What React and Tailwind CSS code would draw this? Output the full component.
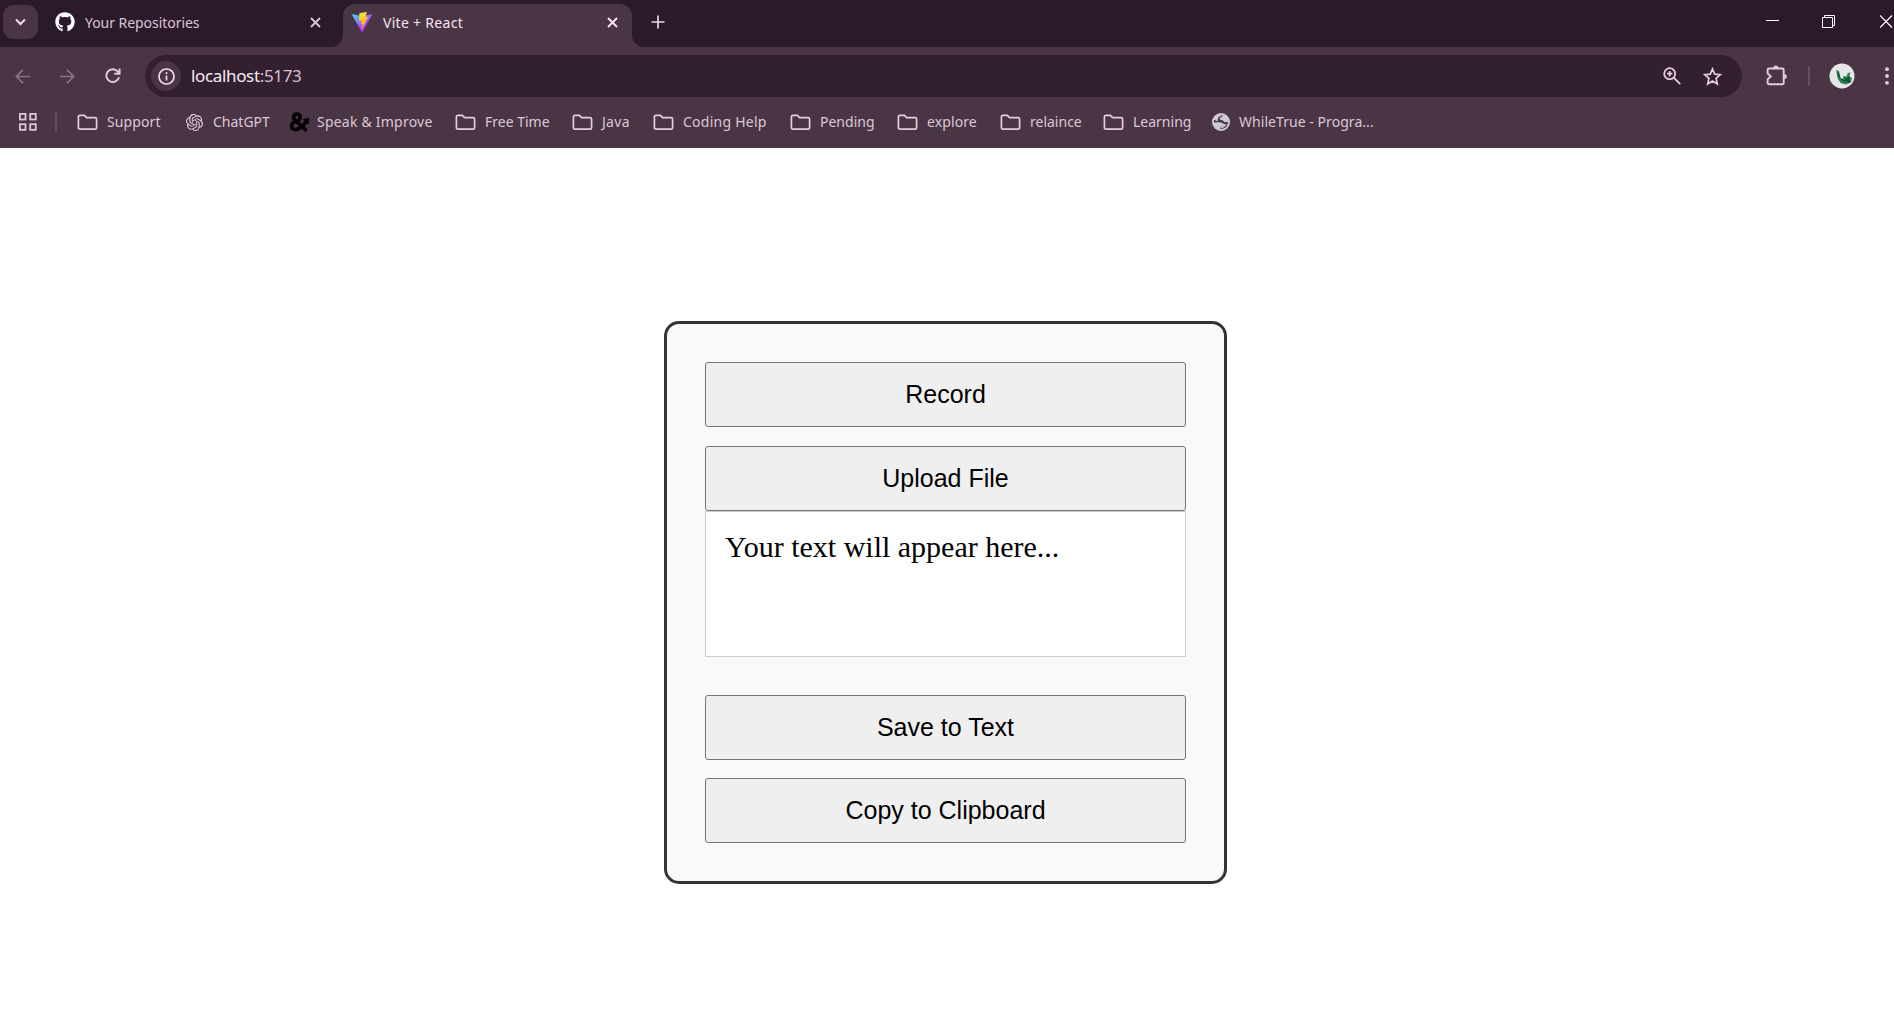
import React from "react";
import { SiOpenai } from "react-icons/si";
import { FaGithub } from "react-icons/fa";

const stroke = { fill: "none", stroke: "currentColor" };

function Close({ className = "" }) {
  return (
    <svg className={className} width="11" height="11" viewBox="0 0 11 11" {...stroke} strokeWidth="1.9">
      <path d="M1 1l9 9M10 1l-9 9" />
    </svg>
  );
}

function ViteLogo() {
  return (
    <svg width="20" height="20" viewBox="0 0 256 257">
      <defs>
        <linearGradient id="v1" x1="-.8%" x2="57.6%" y1="7.7%" y2="78.4%">
          <stop offset="0%" stopColor="#41D1FF" />
          <stop offset="100%" stopColor="#BD34FE" />
        </linearGradient>
        <linearGradient id="v2" x1="43.4%" x2="50.3%" y1="2.2%" y2="89%">
          <stop offset="0%" stopColor="#FFEA83" />
          <stop offset="8.3%" stopColor="#FFDD35" />
          <stop offset="100%" stopColor="#FFA800" />
        </linearGradient>
      </defs>
      <path fill="url(#v1)" d="M255.153 37.938L134.897 252.976c-2.483 4.44-8.862 4.466-11.382.048L.875 37.958c-2.746-4.814 1.371-10.646 6.827-9.67l120.385 21.517a6.537 6.537 0 0 0 2.322-.004l117.867-21.483c5.438-.991 9.574 4.796 6.877 9.62Z" />
      <path fill="url(#v2)" d="M185.432.063L96.44 17.501a3.268 3.268 0 0 0-2.634 3.014l-5.474 92.456a3.268 3.268 0 0 0 3.997 3.378l24.777-5.718c2.318-.535 4.413 1.507 3.936 3.838l-7.361 36.047c-.495 2.426 1.782 4.5 4.151 3.78l15.304-4.649c2.372-.72 4.652 1.36 4.15 3.788l-11.698 56.621c-.732 3.542 3.979 5.473 5.943 2.437l1.313-2.028l72.516-144.72c1.215-2.423-.88-5.186-3.54-4.672l-25.505 4.922c-2.396.462-4.435-1.77-3.759-4.114l16.646-57.705c.677-2.35-1.37-4.583-3.769-4.113Z" />
    </svg>
  );
}

function Folder() {
  return (
    <svg width="21" height="17" viewBox="0 0 21 17" {...stroke} strokeWidth="1.7">
      <path d="M1.4 13.7V2.9Q1.4 1.4 2.9 1.4H7.4L9.6 3.7H18.1Q19.6 3.7 19.6 5.2V13.7Q19.6 15.1 18.1 15.1H2.9Q1.4 15.1 1.4 13.7Z" />
    </svg>
  );
}

function Globe() {
  return (
    <svg width="18" height="18" viewBox="0 0 18 18">
      <circle cx="9" cy="9" r="9" fill="#cfc9d6" />
      <path d="M11.8 2.2C10.300 2.200 10.300 4 8.900 4.300 7.600 4.600 7.200 5.900 8.300 6.800c1.200.7 2.900.3 3.500 1.700.6 1.100 2.200.8 4.200.3.100 3-1.500 5.600-4.300 6.800-.9.300-2.500.5-3.500.3.100-1.200.2-1.900 1.300-2.200 1.300-.3 1.900-1.200 1.500-2.400C10.500 9.700 8.800 9.300 7.200 9.300 5.500 9.300 4 9.400 2.100 9.600 1.700 8.900 2 7.300 2.300 6.700L4 7.800c1 .6 1.900.3 1.800-.9C5.700 5.200 6.600 4.200 7.800 3.600 8.700 3.100 9.300 2 11.800 2.200Z" fill="#4a3545" />
      <path d="M9.500 9.900c2 .4 3 2 5 1.300-1 2.300-3 3.900-5.500 4.200l.3-1.300c1.600-.4 2.400-2.200.2-4.200Z" fill="#cfc9d6" />
    </svg>
  );
}

function Ampersand() {
  return (
    <svg width="21" height="20" viewBox="0 0 21 20" fill="none" stroke="#050305" strokeWidth="3.700">
      <path d="M8.800 8.900C12.200 7.300 12 2 8 2 4 2 3.500 6.500 6.800 9L17.500 18.700" />
      <path d="M7.800 9.300C1.200 10.500.9 17.600 6.500 17.600c4.500 0 7.500-3.800 10.500-7.800" />
      <path d="M13.700 7.200L20.300 5.800 19.700 12.700Z" fill="#050305" stroke="none" />
    </svg>
  );
}

function GridIcon() {
  return (
    <svg width="18" height="18" viewBox="0 0 18 18" {...stroke} strokeWidth="1.800">
      <rect x=".9" y=".9" width="5.600" height="5.600" />
      <rect x="11.200" y=".9" width="5.600" height="5.600" />
      <rect x=".9" y="11.200" width="5.600" height="5.600" />
      <rect x="11.200" y="11.200" width="5.600" height="5.600" />
    </svg>
  );
}

const bookmarks = [
  { label: "Support", icon: <Folder />, cls: "w-[107px]", text: "ml-[9px] tracking-[0.1px]" },
  { label: "ChatGPT", icon: <SiOpenai size={17} />, cls: "w-[105px]", text: "ml-[8px]" },
  { label: "Speak & Improve", icon: <Ampersand />, cls: "w-[166px]", text: "ml-[7px] tracking-[0.22px]" },
  { label: "Free Time", icon: <Folder />, cls: "w-[117px]", text: "ml-[9px]" },
  { label: "Java", icon: <Folder />, cls: "w-[81px]", text: "ml-[9px] tracking-[0.3px]" },
  { label: "Coding Help", icon: <Folder />, cls: "w-[137px]", text: "ml-[9px] tracking-[0.25px]" },
  { label: "Pending", icon: <Folder />, cls: "w-[107px]", text: "ml-[9px]" },
  { label: "explore", icon: <Folder />, cls: "w-[103px]", text: "ml-[9px] tracking-[0.1px]" },
  { label: "relaince", icon: <Folder />, cls: "w-[103px]", text: "ml-[9px]" },
  { label: "Learning", icon: <Folder />, cls: "w-[107px]", text: "ml-[9px]" },
  { label: "WhileTrue - Progra...", icon: <Globe />, cls: "w-[170px]", text: "ml-[8px] tracking-[0.05px]" },
];

function TabStrip() {
  return (
    <div className="flex h-[47px] bg-[#2b1b2a]">
      <button className="ml-[3px] mt-[5px] flex h-[34px] w-[35px] items-center justify-center rounded-[11px] bg-[#4a3545] text-[#f0dcea]">
        <svg width="11" height="8" viewBox="0 0 11 8" {...stroke} strokeWidth="2">
          <path d="M1 1.500l4.500 4.500L10 1.500" />
        </svg>
      </button>
      <div className="flex h-[44px] w-[293px] items-center pl-[17px] text-[#dcc4d5]">
        <FaGithub size={20} className="text-white" />
        <span className="ml-[10px] w-[225px] text-[14px] tracking-[-0.05px]">Your Repositories</span>
        <Close />
      </div>
      <div className="flex w-3 items-end">
        <svg width="12" height="12" viewBox="0 0 12 12"><path d="M12 0v12H0A12 12 0 0 0 12 0Z" fill="#4a3545" /></svg>
      </div>
      <div className="mt-[4px] flex h-[43px] w-[289px] items-center rounded-t-[12px] bg-[#4a3545] pb-[7px] pl-[9px] text-[#f5e6f1]">
        <ViteLogo />
        <span className="ml-[11px] w-[224px] text-[14px] tracking-[0.3px]">Vite + React</span>
        <Close className="shrink-0" />
      </div>
      <div className="flex w-3 items-end">
        <svg width="12" height="12" viewBox="0 0 12 12"><path d="M0 0v12h12A12 12 0 0 1 0 0Z" fill="#4a3545" /></svg>
      </div>
      <div className="flex h-[44px] items-center pl-[7px] text-[#ecd8e6]">
        <svg width="14" height="14" viewBox="0 0 14 14" {...stroke} strokeWidth="1.700"><path d="M7 .5v13M.5 7h13" /></svg>
      </div>
      <div className="flex h-[43px] flex-1 items-center justify-end text-white">
        <svg width="13" height="13" viewBox="0 0 13 13" {...stroke}><path d="M0 5.500h13" /></svg>
        <svg className="ml-[43px]" width="13" height="13" viewBox="0 0 13 13" {...stroke}>
          <path d="M.5 2.500h10v10H.5ZM2.500 2.500v-2h10v10h-2" />
        </svg>
        <svg className="ml-[45px] mr-[1px] shrink-0" width="13" height="13" viewBox="0 0 13 13" {...stroke} strokeWidth="1.200"><path d="M0 .5l12 12M12 .5l-12 12" /></svg>
      </div>
    </div>
  );
}

function Toolbar() {
  return (
    <div className="flex h-[58px] items-center text-[#e6cddd]">
      <svg className="ml-[15px] text-[#8a7485]" width="15" height="15" viewBox="0 0 15 15" {...stroke} strokeWidth="1.700"><path d="M15 7.500H1.500M8 .8L1.300 7.500 8 14.200" /></svg>
      <svg className="ml-[30px] text-[#8a7485]" width="15" height="15" viewBox="0 0 15 15" {...stroke} strokeWidth="1.700"><path d="M0 7.500h13.500M7 .8l6.700 6.700L7 14.200" /></svg>
      <svg className="ml-[30px]" width="16" height="16" viewBox="0 0 16 16" {...stroke} strokeWidth="1.900">
        <path d="M14 9.200A6.400 6.400 0 1 1 12.700 3.500L14.200 5.200M14.600 .5V5.700H9.300" />
      </svg>
      <div className="ml-[24px] flex h-[42px] w-[1597px] items-center rounded-full bg-[#33202f] pl-[6px]">
        <span className="flex size-[30px] items-center justify-center rounded-full bg-[#4a3545] text-[#f0dcea]">
          <svg width="17" height="17" viewBox="0 0 17 17" {...stroke} strokeWidth="1.700">
            <circle cx="8.500" cy="8.500" r="7.500" /><path d="M8.500 7.500v5M8.500 4.300v1.800" />
          </svg>
        </span>
        <span className="ml-[10px] flex-1 text-[17px] leading-[24px] tracking-[-0.35px] text-[#f7eaf4]">localhost<span className="text-[#d5bfcf]">:5173</span></span>
        <svg width="18" height="18" viewBox="0 0 18 18" {...stroke} strokeWidth="1.800">
          <circle cx="6.700" cy="6.700" r="5.500" /><path d="M10.700 10.700l6.500 6.500M6.700 4v5.400M4 6.700h5.400" />
        </svg>
        <svg className="ml-[22px] mr-[20px]" width="19" height="19" viewBox="0 0 19 19" {...stroke} strokeWidth="1.700">
          <path d="M9.500 2l2.200 5.200 5.600.5-4.200 3.700 1.200 5.500-4.800-2.900-4.800 2.900 1.200-5.500L1.700 7.700l5.600-.5Z" />
        </svg>
      </div>
      <svg className="ml-[24px]" width="22" height="22" viewBox="0 0 22 22" {...stroke} strokeWidth="1.900">
        <path d="M3 3.500H16.500Q17.700 3.500 17.700 4.700V18Q17.700 19.200 16.500 19.200H3Q1.600 19.200 1.600 18V14.300L4.800 11.400 1.600 8.300V4.700Q1.600 3.500 3 3.500Z" />
        <path d="M7.300 3a2.500 2.500 0 0 1 5 0ZM18.200 8.900a2.500 2.500 0 0 1 0 5Z" fill="currentColor" stroke="none" />
      </svg>
      <span className="ml-[20px] h-5 w-[2px] bg-[#654e60]" />
      <svg className="ml-[19px]" width="26" height="26" viewBox="0 0 26 26">
        <circle cx="13" cy="13" r="12.500" fill="#e7e7ea" />
        <path d="M7.500 7l2.500 1 1.200 6.500 2.500 2 .8-3.500 3 .5 1.300-3.500 2.700-.5-1.500 4 3 1.500-1.200 4.500-5 2-5.300-1.500-2.800-4.500-1.200-6Z" fill="#2d8052" />
        <path d="M12 16l4 2 4-4-1 5 3-1M9 9l2 6M16 15l3 4" fill="none" stroke="#104b2e" strokeWidth="1.200" />
      </svg>
      <svg className="ml-[30px]" width="4" height="18" viewBox="0 0 4 18" fill="currentColor">
        <circle cx="2" cy="2.200" r="1.900" /><circle cx="2" cy="9" r="1.900" /><circle cx="2" cy="15.800" r="1.900" />
      </svg>
    </div>
  );
}

function BookmarksBar() {
  return (
    <div className="flex h-[43px] items-start pt-[7px] text-[#dcc8d6]">
      <div className="flex h-[20px] items-center">
        <span className="ml-[19px]"><GridIcon /></span>
        <span className="ml-[18px] mr-[20px] h-5 w-[2px] bg-[#654e60]" />
        {bookmarks.map((b) => (
          <div key={b.label} className={`flex shrink-0 items-center ${b.cls}`}>
            <span className="flex w-[21px] shrink-0 justify-center text-[#e6cddd]">{b.icon}</span>
            <span className={`whitespace-nowrap text-[14px] leading-[20px] ${b.text}`}>{b.label}</span>
          </div>
        ))}
      </div>
    </div>
  );
}

function ActionButton({ children, className = "" }) {
  return (
    <button className={`block h-[65px] w-full rounded-[3px] border border-[#767676] bg-[#efefef] text-[25px] text-black ${className}`}>
      {children}
    </button>
  );
}

export default function App() {
  return (
    <div className="flex h-[1027px] w-[1894px] flex-col overflow-hidden bg-white font-['Noto_Sans',sans-serif]">
      <header className="h-[148px] shrink-0 bg-[#4a3545]">
        <TabStrip />
        <Toolbar />
        <BookmarksBar />
      </header>
      <main className="flex flex-1 justify-center pr-[3px] pt-[173px] font-['Liberation_Sans',Arial,sans-serif]">
        <section className="h-[563px] w-[563px] rounded-[15px] border-[3px] border-[#333] bg-[#f9f9f9] p-[38px]">
          <ActionButton>Record</ActionButton>
          <ActionButton className="mt-[19px]">Upload File</ActionButton>
          <div className="h-[146px] border border-[#ccc] bg-white px-[19px] pt-[19px] font-['Liberation_Serif','Times_New_Roman',serif] text-[30px] leading-[32px] text-black">
            Your text will appear here...
          </div>
          <ActionButton className="mt-[38px]">Save to Text</ActionButton>
          <ActionButton className="mt-[18px]">Copy to Clipboard</ActionButton>
        </section>
      </main>
    </div>
  );
}
